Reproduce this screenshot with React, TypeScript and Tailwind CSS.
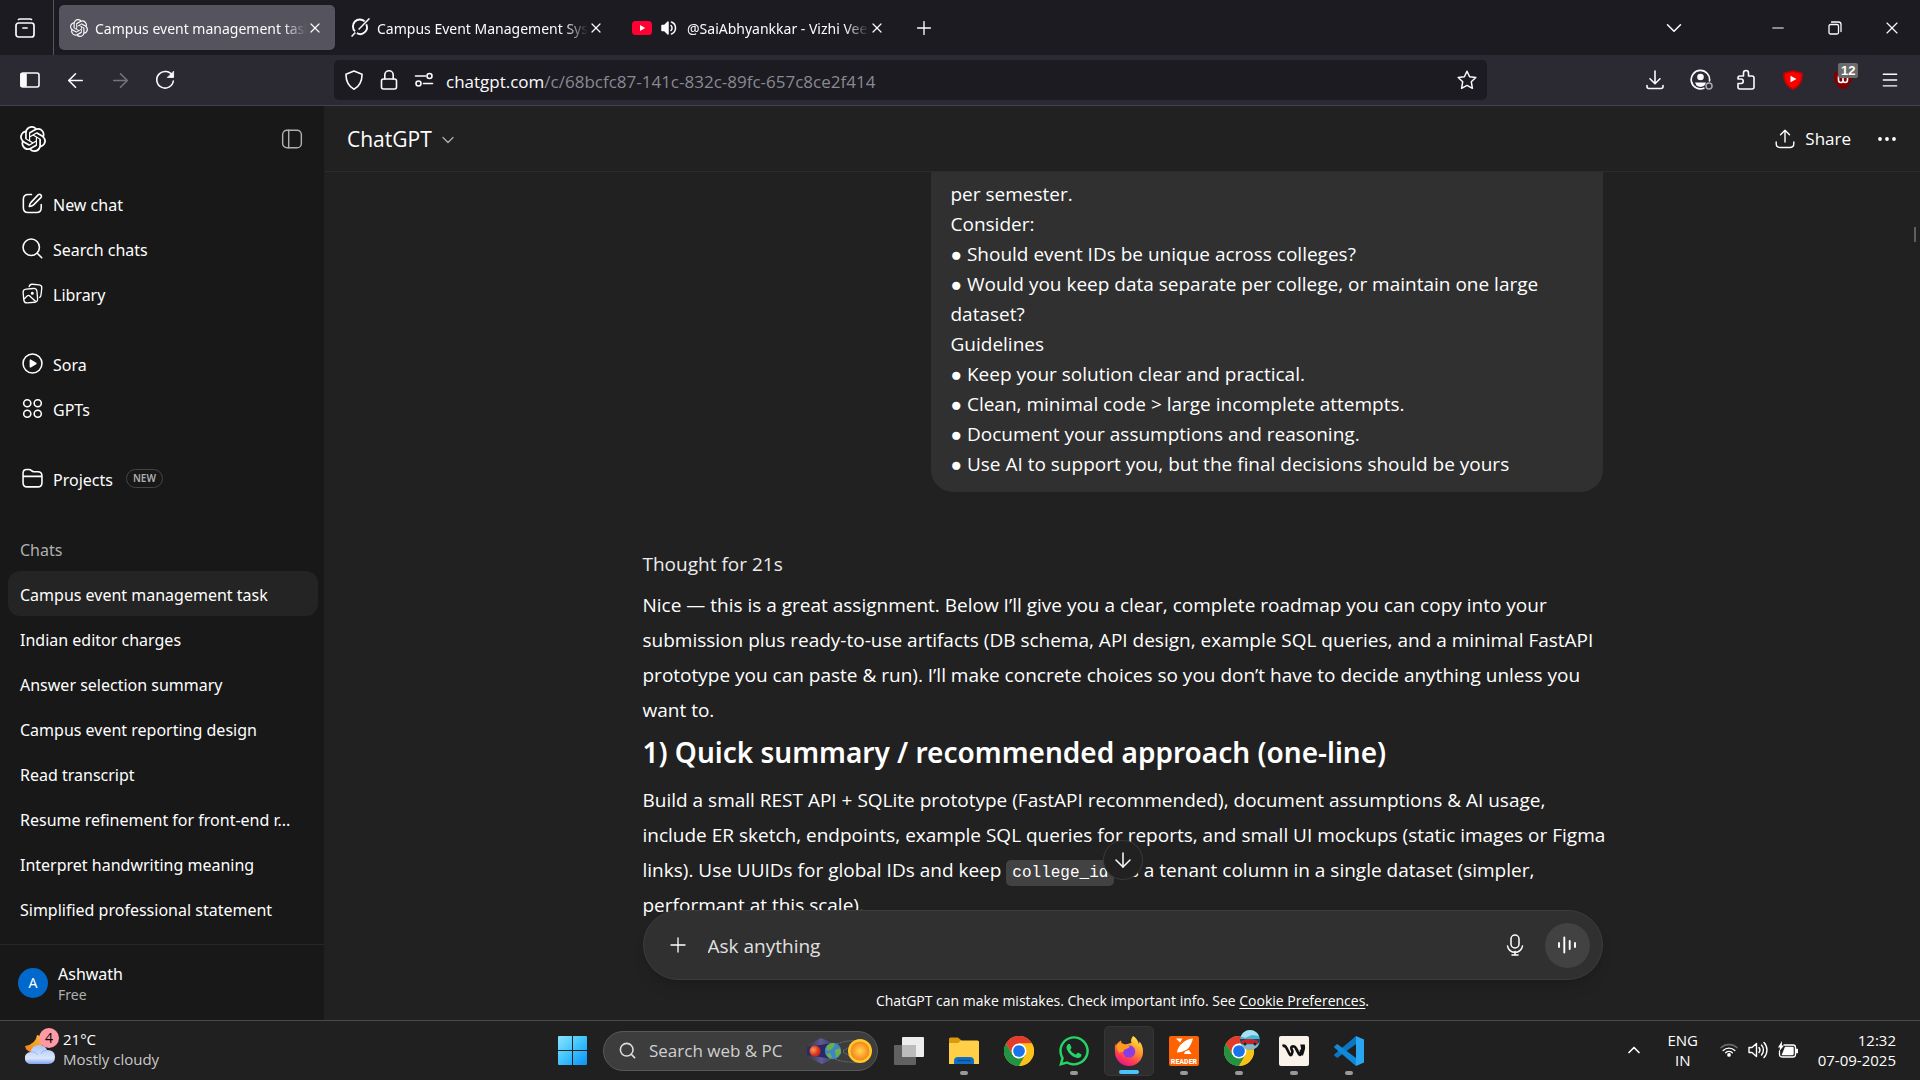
import React from "react";
import {
  ArrowDown, ArrowLeft, ArrowRight, ChevronDown, ChevronUp, Menu, Minus, Plus, Search, X,
} from "lucide-react";
import { FaWhatsapp } from "react-icons/fa";

type IconProps = { className?: string };

const stroke = {
  fill: "none",
  stroke: "currentColor",
  strokeLinecap: "round" as const,
  strokeLinejoin: "round" as const,
};

const KnotLogo = ({ className }: IconProps) => (
  <svg viewBox="0 0 24 24" className={className} fill="currentColor">
    <path d="M22.2819 9.8211a5.9847 5.9847 0 0 0-.5157-4.9108 6.0462 6.0462 0 0 0-6.5098-2.9A6.0651 6.0651 0 0 0 4.9807 4.1818a5.9847 5.9847 0 0 0-3.9977 2.9 6.0462 6.0462 0 0 0 .7427 7.0966 5.98 5.98 0 0 0 .511 4.9107 6.051 6.051 0 0 0 6.5146 2.9001A5.9847 5.9847 0 0 0 13.2599 24a6.0557 6.0557 0 0 0 5.7718-4.2058 5.9894 5.9894 0 0 0 3.9977-2.9001 6.0557 6.0557 0 0 0-.7475-7.0729zm-9.022 12.6081a4.4755 4.4755 0 0 1-2.8764-1.0408l.1419-.0804 4.7783-2.7582a.7948.7948 0 0 0 .3927-.6813v-6.7369l2.02 1.1686a.071.071 0 0 1 .038.052v5.5826a4.504 4.504 0 0 1-4.4945 4.4944zm-9.6607-4.1254a4.4708 4.4708 0 0 1-.5346-3.0137l.142.0852 4.783 2.7582a.7712.7712 0 0 0 .7806 0l5.8428-3.3685v2.3324a.0804.0804 0 0 1-.0332.0615L9.74 19.9502a4.4992 4.4992 0 0 1-6.1408-1.6464zM2.3408 7.8956a4.485 4.485 0 0 1 2.3655-1.9728V11.6a.7664.7664 0 0 0 .3879.6765l5.8144 3.3543-2.0201 1.1685a.0757.0757 0 0 1-.071 0l-4.8303-2.7865A4.504 4.504 0 0 1 2.3408 7.872zm16.5963 3.8558L13.1038 8.364 15.1192 7.2a.0757.0757 0 0 1 .071 0l4.8303 2.7913a4.4944 4.4944 0 0 1-.6765 8.1042v-5.6772a.79.79 0 0 0-.407-.667zm2.0107-3.0231l-.142-.0852-4.7735-2.7818a.7759.7759 0 0 0-.7854 0L9.409 9.2297V6.8974a.0662.0662 0 0 1 .0284-.0615l4.8303-2.7866a4.4992 4.4992 0 0 1 6.6802 4.66zM8.3065 12.863l-2.02-1.1638a.0804.0804 0 0 1-.038-.0567V6.0742a4.4992 4.4992 0 0 1 7.3757-3.4537l-.142.0805L8.704 5.459a.7948.7948 0 0 0-.3927.6813zm1.0976-2.3654l2.602-1.4998 2.6069 1.4998v2.9994l-2.5974 1.4997-2.6067-1.4997Z" />
  </svg>
);

const SlashedRing = ({ className }: IconProps) => (
  <svg viewBox="0 0 20 20" className={className} {...stroke} strokeWidth="2" strokeLinecap="butt">
    <path d="M14.4 3.6A7.1 7.1 0 0 0 4.2 14" />
    <path d="M16 6.6A7.1 7.1 0 0 1 6.2 16" />
    <path d="M19.4.4 8 12" strokeWidth="1.5" />
    <path d="M4.6 15.2.6 19.4" strokeWidth="1.6" />
  </svg>
);

const YouTubeIcon = ({ className }: IconProps) => (
  <svg viewBox="0 0 20 14" className={className}>
    <rect width="20" height="14" rx="3.5" fill="#ff0033" />
    <path d="M8 4v6l5.2-3z" fill="#fff" />
  </svg>
);

const TabSound = ({ className }: IconProps) => (
  <svg viewBox="0 0 16 16" className={className} {...stroke} strokeWidth="1.5">
    <path d="M1 5.5h2.5L7 2v12l-3.500-3.500H1z" fill="currentColor" />
    <path d="M10 5.500a3.500 3.500 0 0 1 0 5M10.500 2a6.500 6.500 0 0 1 0 12" />
  </svg>
);

const TabsView = ({ className }: IconProps) => (
  <svg viewBox="0 0 20 20" className={className} {...stroke} strokeWidth="1.700">
    <rect x="1" y="5" width="18" height="14" rx="2.500" />
    <path d="M3.500 1.500Q4 1 5 1h10q1 0 1.500.5M8 10h4" />
  </svg>
);

const SideView = ({ className }: IconProps) => (
  <svg viewBox="0 0 20 16" className={className} {...stroke} strokeWidth="1.600">
    <rect x="1" y="1" width="18" height="14" rx="2" />
    <path d="M1 2h5v12H1z" fill="currentColor" />
  </svg>
);

const Reload = ({ className }: IconProps) => (
  <svg viewBox="0 0 20 20" className={className} {...stroke} strokeWidth="1.600">
    <path d="M17.500 6A8.300 8.300 0 1 0 18.300 11" />
    <path d="M18.600 1.500v6h-6z" fill="currentColor" strokeWidth=".8" />
  </svg>
);

const ShieldOutline = ({ className }: IconProps) => (
  <svg viewBox="0 0 20 20" className={className} {...stroke} strokeWidth="1.600">
    <path d="M10 1 18 4.200C18.300 11 15 17 10 19.200 5 17 1.700 11 2 4.200Z" />
  </svg>
);

const LockIcon = ({ className }: IconProps) => (
  <svg viewBox="0 0 20 20" className={className} {...stroke} strokeWidth="1.600">
    <rect x="2.500" y="9" width="15" height="10" rx="2" />
    <path d="M5.800 9V5a4.200 4.200 0 0 1 8.400 0v4" />
  </svg>
);

const Permissions = ({ className }: IconProps) => (
  <svg viewBox="0 0 20 16" className={className} {...stroke} strokeWidth="1.600">
    <circle cx="15.500" cy="4" r="2.500" />
    <circle cx="4.500" cy="11.500" r="2.500" />
    <path d="M1.500 4h10M9.500 11.500h9" />
  </svg>
);

const StarIcon = ({ className }: IconProps) => (
  <svg viewBox="0 0 20 20" className={className} {...stroke} strokeWidth="1.500">
    <path d="m10 1.200 2.600 5.600 6.200.7-4.500 4.300 1.100 6.500L10 15.400l-5.400 2.900 1.100-6.500L1.200 7.500l6.200-.7z" />
  </svg>
);

const Download = ({ className }: IconProps) => (
  <svg viewBox="0 0 20 20" className={className} {...stroke} strokeWidth="1.600">
    <path d="M10 1v12.500M5 8.800l5 4.900 5-4.900M2 15.500v1Q2 18.500 4 18.500h12q2 0 2-2v-1" />
  </svg>
);

const Account = ({ className }: IconProps) => (
  <svg viewBox="0 0 24 22" className={className} {...stroke} strokeWidth="1.700">
    <path d="M19.500 12A9.200 9.200 0 1 0 13.800 19.200" />
    <circle cx="10.500" cy="8" r="3.300" fill="currentColor" stroke="none" />
    <path d="M5 13.500h11l-1.500 3a7 7 0 0 1-8 0z" fill="currentColor" stroke="none" />
    <circle cx="19" cy="17" r="3" stroke="#a9a8b0" strokeWidth="1.500" />
  </svg>
);

const Puzzle = ({ className }: IconProps) => (
  <svg viewBox="0 0 20 22" className={className} {...stroke} strokeWidth="1.600">
    <path d="M7.500 7V4a2.500 2.500 0 0 1 5 0v3H16q2 0 2 2v9q0 2-2 2H4q-2 0-2-2v-3.500h3a2 2 0 0 0 0-4.500H2V9q0-2 2-2z" />
  </svg>
);

const RedShield = ({ className }: IconProps) => (
  <svg viewBox="0 0 20 20" className={className}>
    <path d="M10 .2 19.700 2.800C20.500 11 17 17 10 19.900 3 17 -.5 11 .3 2.800Z" fill="#c80000" />
    <path d="M10 1.900 18 4C18.500 10.500 15.500 15.500 10 18 4.500 15.500 1.500 10.500 2 4Z" fill="#ff0000" />
    <path d="M7.500 5.700v6.600l6-3.300z" fill="#fff" />
  </svg>
);

const DarkShield = ({ className }: IconProps) => (
  <svg viewBox="0 0 20 20" className={className}>
    <path d="M10 .5Q14 2.500 19 2.500C19.500 11 17.500 16 10 19.700 2.500 16 .5 11 1 2.500 6 2.500 10 .5 10 .5Z" fill="#800000" />
    <path d="M5.500 6v4q0 2.500 2.300 2.500T10 10V8v2q0 2.500 2.200 2.500t2.300-2.500V6" fill="none" stroke="#fff" strokeWidth="1.600" />
  </svg>
);

const PanelToggle = ({ className }: IconProps) => (
  <svg viewBox="0 0 20 20" className={className} {...stroke} strokeWidth="1.300">
    <rect x="1.500" y="2" width="17" height="16" rx="4" />
    <path d="M7 2v16" />
  </svg>
);

const NewChat = ({ className }: IconProps) => (
  <svg viewBox="0 0 20 20" className={className} {...stroke} strokeWidth="1.500">
    <path d="M9 1.500H6Q1.300 1.500 1.300 6v8q0 4.500 4.500 4.500h8q4.500 0 4.500-4.500v-3" />
    <path d="M15.300 1.800q1.400-1.200 2.600 0t0 2.600L11 11.300q-1.500 1.300-4 1.600.3-2.500 1.600-4z" />
  </svg>
);

const SearchIcon = ({ className }: IconProps) => (
  <svg viewBox="0 0 20 20" className={className} {...stroke} strokeWidth="1.500">
    <circle cx="8.800" cy="8.800" r="7.800" />
    <path d="m14.500 14.500 4.300 4.300" />
  </svg>
);

const Library = ({ className }: IconProps) => (
  <svg viewBox="0 0 22 22" className={className} {...stroke} strokeWidth="1.400">
    <rect x="1.500" y="6" width="14.500" height="14.500" rx="3.500" transform="rotate(-5 9 13)" />
    <path d="M7.500 3.800Q8 1 11 1.300l7 .7q3 .5 2.700 3.200L20 12q-.3 2.600-1.500 3" />
    <path d="m2.500 16.500 3-3q1.300-1 2.600 0l6 5.500" />
    <circle cx="10.800" cy="10.800" r=".9" fill="currentColor" />
  </svg>
);

const PlayRing = ({ className }: IconProps) => (
  <svg viewBox="0 0 20 20" className={className} {...stroke} strokeWidth="1.500">
    <circle cx="10" cy="10" r="9" />
    <path d="M8 6.800v6.400l5.200-3.200z" fill="currentColor" />
  </svg>
);

const FourRings = ({ className }: IconProps) => (
  <svg viewBox="0 0 20 20" className={className} {...stroke} strokeWidth="1.500">
    <circle cx="5" cy="5" r="3.400" />
    <circle cx="15" cy="5" r="3.400" />
    <circle cx="5" cy="15" r="3.400" />
    <circle cx="15" cy="15" r="3.400" />
  </svg>
);

const FolderIcon = ({ className }: IconProps) => (
  <svg viewBox="0 0 20 20" className={className} {...stroke} strokeWidth="1.500">
    <path d="M1 5q0-3.500 3.500-3.500h2q1.500 0 2.500 1t2.500 1H15q4 0 4 4V14q0 4-4 4H5q-4 0-4-4zM1 8h18" />
  </svg>
);

const ShareIcon = ({ className }: IconProps) => (
  <svg viewBox="0 0 20 20" className={className} {...stroke} strokeWidth="1.400">
    <path d="M10 13V1.300M5.500 5.800 10 1.300l4.500 4.500M1.200 13v1.500q0 4 4 4h9.600q4 0 4-4V13" />
  </svg>
);

const Dots = ({ className }: IconProps) => (
  <svg viewBox="0 0 20 6" className={className} fill="currentColor">
    <circle cx="3" cy="3" r="1.900" />
    <circle cx="10" cy="3" r="1.900" />
    <circle cx="17" cy="3" r="1.900" />
  </svg>
);

const Mic = ({ className }: IconProps) => (
  <svg viewBox="0 0 18 22" className={className} {...stroke} strokeWidth="1.500">
    <rect x="5" y="1" width="8" height="13" rx="4" />
    <path d="M1.500 12a7.600 7.600 0 0 0 15 0M9 17.500V21M6 21h6" />
  </svg>
);

const Voice = ({ className }: IconProps) => (
  <svg viewBox="0 0 20 20" className={className} {...stroke} strokeWidth="1.900">
    <path d="M2 8v4M7.300 2.500v15M12.700 6v8M18 8v4" />
  </svg>
);

const Restore = ({ className }: IconProps) => (
  <svg viewBox="0 0 14 14" className={className} {...stroke} strokeWidth="1.300">
    <rect x="1" y="3.500" width="9.500" height="9.500" rx="1.500" />
    <path d="M3.500 1h7Q13 1 13 3.500v7" />
  </svg>
);

const Weather = ({ className }: IconProps) => (
  <svg viewBox="0 0 30 30" className={className}>
    <defs>
      <linearGradient id="cloud" x1="0" y1="0" x2="0" y2="1">
        <stop offset="0" stopColor="#a9c5f5" />
        <stop offset=".7" stopColor="#dbe6fb" />
        <stop offset="1" stopColor="#7ba4ee" />
      </linearGradient>
      <linearGradient id="moon" x1="0" y1="1" x2="1" y2="0">
        <stop offset="0" stopColor="#f27a1a" />
        <stop offset="1" stopColor="#fbc02d" />
      </linearGradient>
    </defs>
    <path d="M12 0q-1 9-12 11 1 6 8 6 9-1 10-11-1-5-6-6Z" fill="url(#moon)" />
    <path d="M6 29a6 6 0 0 1-.5-12Q7 10 14 10q6 0 8 5 8 0 8 7t-7 7Z" fill="url(#cloud)" />
    <path d="M5.500 17q5-1 7.500 3M22 15q-5 0-6 4" fill="none" stroke="#88aaf0" strokeWidth=".7" />
  </svg>
);

const StartLogo = ({ className }: IconProps) => (
  <svg viewBox="0 0 29 29" className={className}>
    <defs>
      <linearGradient id="start" x1="0" y1="0" x2="1" y2="1">
        <stop offset="0" stopColor="#8be4ff" />
        <stop offset=".5" stopColor="#3fc3fb" />
        <stop offset="1" stopColor="#0a91f5" />
      </linearGradient>
    </defs>
    <path d="M1 0h13v14H0V1q0-1 1-1zM15 0h13q1 0 1 1v13H15zM0 15h14v14H1q-1 0-1-1zM15 15h14v13q0 1-1 1H15z" fill="url(#start)" />
  </svg>
);

const SolarArt = ({ className }: IconProps) => (
  <svg viewBox="0 0 66 28" className={className}>
    <defs>
      <radialGradient id="sun">
        <stop offset="0" stopColor="#ffd84a" />
        <stop offset="1" stopColor="#f6831e" />
      </radialGradient>
      <radialGradient id="mars" cx=".35" cy=".4">
        <stop offset="0" stopColor="#ff9d5c" />
        <stop offset="1" stopColor="#d52d14" />
      </radialGradient>
      <linearGradient id="shade">
        <stop offset="0" stopColor="#4a4590" stopOpacity="0" />
        <stop offset=".5" stopColor="#6b66b8" />
        <stop offset="1" stopColor="#4a4590" stopOpacity=".4" />
      </linearGradient>
    </defs>
    <path d="m0 8 14-7 14 6v14l-13 6L0 20z" fill="url(#shade)" opacity=".75" />
    <path d="M0 10 26 6v16L0 18z" fill="#2c2865" />
    <path d="M30 7q9-4 20-3M36 14l8-5M36 15l8 5M28 22q10 4 22 3" stroke="#8a8a8a" strokeWidth=".7" strokeDasharray="2 1" fill="none" />
    <circle cx="8" cy="14" r="5.500" fill="url(#mars)" />
    <circle cx="26" cy="14" r="8.200" fill="#3a86c8" />
    <path d="M20 9q5-5 8-2l-2 4-4 3-3-1zM28 13l5-2 1 5-5 5zM19 17l4-1 2 4-2 2z" fill="#6fae45" />
    <circle cx="53" cy="14" r="12" fill="#ffca28" />
    <circle cx="53" cy="14" r="9.500" fill="url(#sun)" />
  </svg>
);

const TaskView = ({ className }: IconProps) => (
  <svg viewBox="0 0 30 28" className={className}>
    <rect x="8" width="22" height="20" rx="1" fill="#ededed" />
    <rect y="8" width="22" height="20" rx="1" fill="#6d6d6d" opacity=".85" />
    <path d="M8 8h14v12H8z" fill="#bcbcbc" />
  </svg>
);

const Explorer = ({ className }: IconProps) => (
  <svg viewBox="0 0 30 28" className={className}>
    <path d="M0 2q0-1.500 1.500-1.500H9L13 4v5H0z" fill="#d99a0b" />
    <path d="M0 6h9l3-2.500h16.500Q30 3.500 30 5v22H0z" fill="#ffcf48" />
    <path d="M5 27v-3q0-4 4-4h12q4 0 4 4v3z" fill="#0f6fc5" />
    <path d="M9 23.500h12" stroke="#0a4b94" strokeWidth="1.500" strokeLinecap="round" />
  </svg>
);

const ChromeIcon = ({ className }: IconProps) => (
  <svg viewBox="0 0 48 48" className={className}>
    <circle cx="24" cy="24" r="24" fill="#fbc116" />
    <path d="M3.200 12A24 24 0 0 1 44.800 12H24v12L13.600 30Z" fill="#e33b2e" />
    <path d="M3.200 12A24 24 0 0 0 24 48L34.400 30 24 24 13.600 30Z" fill="#229342" />
    <path d="M24 12h20.800A24 24 0 0 1 24 48L34.400 30Z" fill="#fbc116" />
    <circle cx="24" cy="24" r="12" fill="#fff" />
    <circle cx="24" cy="24" r="9.400" fill="#1a73e8" />
  </svg>
);

const FoxIcon = ({ className }: IconProps) => (
  <svg viewBox="0 0 30 30" className={className}>
    <defs>
      <linearGradient id="fox" x1=".8" y1="0" x2=".3" y2="1">
        <stop offset="0" stopColor="#fff04a" />
        <stop offset=".4" stopColor="#ff9a2b" />
        <stop offset=".75" stopColor="#ff3d4f" />
        <stop offset="1" stopColor="#e3129a" />
      </linearGradient>
      <radialGradient id="globe">
        <stop offset="0" stopColor="#7a3df5" />
        <stop offset="1" stopColor="#9a3bd8" />
      </radialGradient>
    </defs>
    <path d="M19 0q-3 4-1.500 7L9 9Q7 7 7 4.500 3.500 6 2.500 9L1.800 7.500Q0 11 1 16a14 14 0 0 0 28 0q.3-6-3.500-10.500L25 8Q23 2 19 0Z" fill="url(#fox)" />
    <circle cx="15" cy="15.500" r="6.300" fill="url(#globe)" />
    <path d="M3 8q4-1.500 8 .5l5 1.500q-1 2.500-4 3-3 1-2.500 3-3-1-4 1Q2 14 3 8Z" fill="#ff9c1f" />
  </svg>
);

const ReaderIcon = ({ className }: IconProps) => (
  <svg viewBox="0 0 30 30" className={className}>
    <rect width="30" height="30" rx="2" fill="#ff6200" />
    <path d="M7 2.500h6.500L11 6.500ZM24 2.500Q19 2.500 14 6.500 8.500 11 8 16.500q5 0 10-3Q22 10 24 2.500ZM16 15.500l4-1.500 2.500 4H15Z" fill="#fff" />
    <text x="15" y="27.500" textAnchor="middle" fill="#fff" fontFamily="Roboto, sans-serif" fontWeight="900" fontSize="7">READER</text>
  </svg>
);

const WaveTile = ({ className }: IconProps) => (
  <svg viewBox="0 0 30 30" className={className}>
    <rect width="30" height="30" rx="2" fill="#faf3ea" />
    <path d="M3.500 10Q6 9 7.500 12l3 6q1.300 2.500 2.300 0l.7-2.500-1-2.500q-1-3 2.500-2.500 1.200.2 2 2l3 5.500q1 2 1.800 0 .8-2 .2-4.500" fill="none" stroke="#111" strokeWidth="2.700" strokeLinejoin="round" />
    <path d="M21.300 8.500h4.500q.8 3-.3 6.500l-1.700 5-2-3q.8-4-.5-8.500Z" fill="#111" />
  </svg>
);

const CodeIcon = ({ className }: IconProps) => (
  <svg viewBox="0 0 30 30" className={className}>
    <path d="M22 0 30 3.500v23L22 30Z" fill="#2aa5f2" />
    <path d="M22 0v8L3.200 22 .5 19.800q-.7-.8 0-1.500Z" fill="#0a77c2" />
    <path d="M22 30v-8L3.200 8 .5 10.200q-.7.8 0 1.500Z" fill="#1289d8" />
  </svg>
);

const PhotoBadge = ({ className }: IconProps) => (
  <svg viewBox="0 0 20 20" className={className}>
    <clipPath id="photo"><circle cx="10" cy="10" r="10" /></clipPath>
    <g clipPath="url(#photo)">
      <path d="M0 0h20v20H0z" fill="#45b7d6" />
      <path d="M4 0 16 0 20 6 12 5 5 8 0 6z" fill="#a5e2ef" />
      <path d="M0 9h20v4H0z" fill="#1d4857" />
      <path d="m1 11 5-2h7l5 2v3H1z" fill="#c5252e" />
      <path d="M0 15h20v5H0z" fill="#8fb6c1" />
      <circle cx="5" cy="14" r="1.500" fill="#222" />
      <circle cx="15" cy="14" r="1.500" fill="#222" />
    </g>
  </svg>
);

const Wifi = ({ className }: IconProps) => (
  <svg viewBox="0 0 20 16" className={className} {...stroke} strokeWidth="1.500">
    <path d="M1 5.500a13 13 0 0 1 18 0" opacity=".35" />
    <path d="M3.500 8.500a9.300 9.300 0 0 1 13 0M6.300 11a5.500 5.500 0 0 1 7.400 0" />
    <circle cx="10" cy="13.500" r="1.300" fill="currentColor" />
  </svg>
);

const TraySound = ({ className }: IconProps) => (
  <svg viewBox="0 0 20 18" className={className} {...stroke} strokeWidth="1.400">
    <path d="M1 6.500h3L8.500 2.500v13L4 11.500H1z" />
    <path d="M11 6.500a4 4 0 0 1 0 5M13.500 4a7.500 7.500 0 0 1 0 10M16 1.500a11 11 0 0 1 0 15" />
  </svg>
);

const Battery = ({ className }: IconProps) => (
  <svg viewBox="0 0 20 17" className={className} {...stroke} strokeWidth="1.300">
    <path d="M6 4h9q2.500 0 2.500 2.500v7q0 2.500-2.500 2.500H4q-2.500 0-2.500-2.500V10" />
    <path d="M7 5.800h7.500q1.200 0 1.200 1.200v6q0 1.200-1.200 1.200H3.500Z" fill="currentColor" stroke="none" />
    <path d="M18 8.500h1.500v3H18z" fill="currentColor" />
    <path d="M4 0 0 6.500h2L1.500 10 6 4.500H3.800Z" fill="currentColor" stroke="none" />
  </svg>
);

const fade = "[mask-image:linear-gradient(to_right,black_calc(100%-24px),transparent)]";

function Tab({ title, active, children }: { title: string; active?: boolean; children: React.ReactNode }) {
  return (
    <div className={`flex h-[45px] w-[276px] items-center rounded-[5px] pr-3 pl-[11px] ${active ? "bg-[#54535e] shadow" : ""}`}>
      {children}
      <span className={`min-w-0 flex-1 overflow-hidden pt-[3px] font-['Noto_Sans'] text-sm whitespace-nowrap ${fade}`}>{title}</span>
      <button aria-label="Close tab" className="flex w-4 justify-center">
        <X className="size-4 shrink-0 stroke-[1.800]" />
      </button>
    </div>
  );
}

function BrowserChrome() {
  return (
    <header className="shrink-0 text-[#fbfbfe]">
      <div className="flex h-[55px] items-center bg-[#1c1b22]">
        <button aria-label="Recent tabs" className="flex h-full w-[54px] items-center border-r border-[#56555e] pl-[15px]">
          <TabsView className="size-5" />
        </button>
        <div className="ml-[5px] flex gap-[5px]">
          <Tab title="Campus event management task" active>
            <KnotLogo className="mr-[7px] size-[18px] shrink-0" />
          </Tab>
          <Tab title="Campus Event Management System">
            <SlashedRing className="mr-[7px] size-[19px] shrink-0" />
          </Tab>
          <Tab title="@SaiAbhyankkar - Vizhi Veekura">
            <YouTubeIcon className="mr-[9px] h-[14px] w-5 shrink-0" />
            <TabSound className="mr-[10px] size-4 shrink-0" />
          </Tab>
        </div>
        <button aria-label="New tab" className="ml-4"><Plus className="size-[22px] stroke-[1.500]" /></button>
        <button aria-label="List all tabs" className="mr-[62px] ml-auto"><ChevronDown className="size-[26px] stroke-[1.400]" /></button>
        <div className="flex items-center">
          <button aria-label="Minimize" className="flex w-[57px] justify-center"><Minus className="size-[18px] stroke-[1.500]" /></button>
          <button aria-label="Restore" className="flex w-[57px] justify-center"><Restore className="size-[14px]" /></button>
          <button aria-label="Close window" className="flex w-[57px] justify-center"><X className="size-5 stroke-[1.400]" /></button>
        </div>
      </div>
      <div className="flex h-[51px] items-center border-b border-[#43424b] bg-[#2b2a33]">
        <div className="flex w-[334px] shrink-0 items-center pl-[20px]">
          <button aria-label="Sidebar"><SideView className="h-4 w-5" /></button>
          <button aria-label="Back" className="ml-[24px]"><ArrowLeft className="size-[23px] stroke-[1.700]" /></button>
          <button aria-label="Forward" className="ml-[22px] text-[#75747c]"><ArrowRight className="size-[23px] stroke-[1.700]" /></button>
          <button aria-label="Reload" className="ml-[23px]"><Reload className="size-[20px]" /></button>
        </div>
        <div className="flex h-10 flex-1 items-center rounded-[5px] bg-[#1c1b22] px-[10px]">
          <ShieldOutline className="size-5" />
          <LockIcon className="ml-[15px] size-5" />
          <Permissions className="ml-[15px] h-4 w-5" />
          <div className="ml-3 flex-1 pt-[3px] text-[17px] text-[#8a8990]">
            <span className="text-[#fbfbfe]">chatgpt.com</span>/c/68bcfc87-141c-832c-89fc-657c8ce2f414
          </div>
          <button aria-label="Bookmark"><StarIcon className="size-5" /></button>
        </div>
        <div className="flex w-[433px] shrink-0 items-center justify-end pr-[20px]">
          <button aria-label="Downloads"><Download className="size-5" /></button>
          <button aria-label="Account" className="ml-[25px]"><Account className="h-[22px] w-6" /></button>
          <button aria-label="Extensions" className="ml-[22px]"><Puzzle className="h-[22px] w-5" /></button>
          <button aria-label="Video blocker" className="ml-[27px]"><RedShield className="size-5" /></button>
          <button aria-label="Content blocker" className="relative ml-[30px]">
            <DarkShield className="size-5" />
            <span className="absolute -top-[7px] left-[5px] rounded-[2px] bg-[#6b6b6b] px-[3px] font-['Liberation_Sans'] text-[13px] leading-[15px] font-bold text-white">12</span>
          </button>
          <button aria-label="Menu" className="ml-[27px]"><Menu className="size-5 stroke-[1.700]" /></button>
        </div>
      </div>
    </header>
  );
}

const groups = [
  [
    { label: "New chat", Icon: NewChat },
    { label: "Search chats", Icon: SearchIcon },
    { label: "Library", Icon: Library },
  ],
  [
    { label: "Sora", Icon: PlayRing },
    { label: "GPTs", Icon: FourRings },
  ],
  [{ label: "Projects", Icon: FolderIcon }],
];

const chats = [
  "Campus event management task",
  "Indian editor charges",
  "Answer selection summary",
  "Campus event reporting design",
  "Read transcript",
  "Resume refinement for front-end r...",
  "Interpret handwriting meaning",
  "Simplified professional statement",
];

function Sidebar() {
  return (
    <aside className="flex w-[325px] shrink-0 flex-col border-r border-[#202020] bg-[#181818] font-['Noto_Sans'] text-base">
      <div className="flex h-[65px] shrink-0 items-center justify-between pr-[21px] pl-[20px]">
        <KnotLogo className="size-[26px]" />
        <button aria-label="Close sidebar" className="text-[#afafaf]"><PanelToggle className="size-[22px]" /></button>
      </div>
      <nav className="mt-[10px] flex flex-col gap-[25px]">
        {groups.map((group, i) => (
          <div key={i}>
            {group.map(({ label, Icon }) => (
              <a key={label} href="#" className="flex h-[45px] items-center gap-[10px] pl-[22px]">
                <Icon className="size-[21px]" />
                <span className="pt-[3px]">{label}</span>
                {label === "Projects" && (
                  <span className="ml-[3px] rounded-full border border-[#444] px-[6px] text-[10px] leading-[17px] font-semibold text-[#afafaf]">NEW</span>
                )}
              </a>
            ))}
          </div>
        ))}
      </nav>
      <h2 className="mt-[25px] flex h-[45px] items-center pt-[3px] pl-5 text-[#afafaf]">Chats</h2>
      <div className="flex flex-1 flex-col pr-[6px] pl-2">
        {chats.map((chat, i) => (
          <a key={chat} href="#" className={`h-[45px] truncate rounded-xl px-3 pt-[2px] leading-[44px] ${i === 0 ? "bg-[#242424]" : ""}`}>{chat}</a>
        ))}
      </div>
      <button className="flex h-[76px] shrink-0 items-center gap-[10px] border-t border-[#262626] pl-[18px] text-left">
        <span className="flex size-[30px] items-center justify-center rounded-full bg-[#0169cc] text-sm">A</span>
        <span className="flex flex-col pt-[3px]">
          <span className="leading-[22px]">Ashwath</span>
          <span className="text-sm leading-5 text-[#afafaf]">Free</span>
        </span>
      </button>
    </aside>
  );
}

function Conversation() {
  return (
    <main className="relative flex min-w-0 flex-1 flex-col bg-[#212121] text-[19px]">
      <div className="flex h-[66px] shrink-0 items-center justify-between border-b border-[#2c2c2c] pr-[23px] pl-[22px]">
        <button className="flex items-center gap-[6px] pt-[3px] text-[21px]">
          ChatGPT <ChevronDown className="size-5 stroke-[1.500] text-[#afafaf]" />
        </button>
        <div className="flex items-center">
          <button className="flex items-center gap-[10px] pt-px text-[17px]"><ShareIcon className="size-5" />Share</button>
          <button aria-label="More" className="ml-[26px]"><Dots className="h-[6px] w-5" /></button>
        </div>
      </div>
      <div className="min-h-0 flex-1 overflow-hidden">
        <div className="mx-auto flex max-w-[960px] flex-col">
          <div className="w-[672px] self-end rounded-b-[22px] bg-[#303030] px-5 pt-[7px] pb-[13px] leading-[30px]">
            per semester.<br />
            Consider:<br />
            ● Should event IDs be unique across colleges?<br />
            ● Would you keep data separate per college, or maintain one large<br />
            dataset?<br />
            Guidelines<br />
            ● Keep your solution clear and practical.<br />
            ● Clean, minimal code &gt; large incomplete attempts.<br />
            ● Document your assumptions and reasoning.<br />
            ● Use AI to support you, but the final decisions should be yours
          </div>
          <div className="mt-[57px] leading-[30px] text-[#ececec]">Thought for 21s</div>
          <p className="mt-[9px] leading-[35px] whitespace-nowrap">
            Nice — this is a great assignment. Below I’ll give you a clear, complete roadmap you can copy into your<br />
            submission plus ready-to-use artifacts (DB schema, API design, example SQL queries, and a minimal FastAPI<br />
            prototype you can paste &amp; run). I’ll make concrete choices so you don’t have to decide anything unless you<br />
            want to.
          </p>
          <h1 className="mt-1 font-['Noto_Sans'] text-[28px] leading-[40px] font-semibold">1) Quick summary / recommended approach (one-line)</h1>
          <p className="mt-[11px] leading-[35px] whitespace-nowrap">
            Build a small REST API + SQLite prototype (FastAPI recommended), document assumptions &amp; AI usage,<br />
            include ER sketch, endpoints, example SQL queries for reports, and small UI mockups (static images or Figma<br />
            links). Use UUIDs for global IDs and keep{" "}
            <code className="rounded-[5px] bg-[#424242] px-[6px] py-[4px] font-['Liberation_Mono'] text-base">college_id</code> as a tenant column in a single dataset (simpler,<br />
            performant at this scale).
          </p>
        </div>
      </div>
      <div className="relative z-10 mx-auto -mt-2 w-full max-w-[960px] shrink-0">
        <button aria-label="Scroll to bottom" className="absolute -top-[70px] left-1/2 -ml-5 flex size-10 items-center justify-center rounded-full border border-[#3a3a3a] bg-[#212121]">
          <ArrowDown className="size-6 stroke-[1.500]" />
        </button>
        <form className="flex h-[70px] items-center rounded-full border border-[#3c3c3c] bg-[#303030] pr-3 pl-[22px] shadow-lg">
          <button type="button" aria-label="Add files"><Plus className="size-6 stroke-[1.300]" /></button>
          <input aria-label="Message" placeholder="Ask anything" className="ml-[18px] flex-1 bg-transparent pt-[3px] outline-none placeholder:text-[#e0e0e0]" />
          <button type="button" aria-label="Dictate" className="mr-[21px]"><Mic className="h-[22px] w-[18px]" /></button>
          <button type="button" aria-label="Voice mode" className="flex size-[45px] items-center justify-center rounded-full bg-[#424242]"><Voice className="size-5" /></button>
        </form>
        <p className="flex h-10 items-center justify-center pt-px text-sm text-white">
          <span>ChatGPT can make mistakes. Check important info. See <a href="#" className="underline underline-offset-2">Cookie Preferences</a>.</span>
        </p>
      </div>
      <div className="absolute top-[121px] right-1 h-[15px] w-[2px] bg-[#5f5f5f]" />
    </main>
  );
}

const apps = [
  { name: "Task view", Icon: TaskView, mark: "" },
  { name: "File Explorer", Icon: Explorer, mark: "w-2 bg-[#999]" },
  { name: "Chrome", Icon: ChromeIcon, mark: "" },
  { name: "WhatsApp", Icon: FaWhatsapp, mark: "w-2 bg-[#999]" },
  { name: "Firefox", Icon: FoxIcon, mark: "w-5 bg-[#4cc2ff]" },
  { name: "Reader", Icon: ReaderIcon, mark: "w-2 bg-[#999]" },
  { name: "Chrome profile", Icon: ChromeIcon, mark: "w-2 bg-[#999]" },
  { name: "Notes", Icon: WaveTile, mark: "w-2 bg-[#999]" },
  { name: "Code", Icon: CodeIcon, mark: "w-2 bg-[#999]" },
];

function Taskbar() {
  return (
    <footer className="relative flex h-[60px] shrink-0 items-center justify-between border-t border-[#4a4a4a] bg-[#202020] text-[15px] leading-[20px]">
      <button className="flex items-center gap-2 pb-[2px] pl-[25px] text-left">
        <span className="relative">
          <Weather className="size-[30px]" />
          <span className="absolute -top-[7px] left-[14px] flex size-5 items-center justify-center rounded-full bg-[#ff99a4] text-sm text-black">4</span>
        </span>
        <span className="flex flex-col pb-[2px]">
          <span>21°C</span>
          <span className="text-[#c8c8c8]">Mostly cloudy</span>
        </span>
      </button>
      <div className="absolute left-1/2 flex -translate-x-1/2 items-center pl-3">
        <button aria-label="Start" className="mr-4"><StartLogo className="size-[29px]" /></button>
        <label className="mr-[6px] flex h-10 w-[275px] items-center rounded-full border border-[#585858] bg-[#3d3d3d] pr-1 pl-[14px]">
          <Search className="size-[19px] text-[#ddd]" />
          <input aria-label="Search" placeholder="Search web & PC" className="ml-3 w-[140px] bg-transparent text-[17px] outline-none placeholder:text-[#d0d0d0]" />
          <SolarArt className="ml-auto h-7 w-[66px] shrink-0" />
        </label>
        <div className="flex gap-[5px]">
          {apps.map(({ name, Icon, mark }) => (
            <button key={name} aria-label={name} className={`relative flex size-[50px] items-center justify-center rounded-[5px] ${name === "Firefox" ? "border border-[#363636] bg-[#2d2d2d]" : ""}`}>
              <Icon className={name === "WhatsApp" ? "size-[34px] text-[#25d366]" : "size-[30px]"} />
              {name === "Chrome profile" && <PhotoBadge className="absolute top-1 right-1 size-5" />}
              {mark && <span className={`absolute bottom-[1px] h-1 rounded-full ${mark}`} />}
            </button>
          ))}
        </div>
      </div>
      <div className="flex items-center pr-6 pb-[2px]">
        <ChevronUp className="size-5" />
        <div className="ml-[14px] w-[50px] text-center">ENG<br />IN</div>
        <Wifi className="ml-[12px] h-4 w-[18px]" />
        <TraySound className="ml-[10px] h-[18px] w-5" />
        <Battery className="ml-[10px] h-[17px] w-5" />
        <div className="ml-[20px] text-right">12:32<br />07-09-2025</div>
      </div>
    </footer>
  );
}

export default function App() {
  return (
    <div className="flex h-screen flex-col overflow-hidden bg-[#212121] font-['Open_Sans',sans-serif] text-white">
      <BrowserChrome />
      <div className="flex min-h-0 flex-1">
        <Sidebar />
        <Conversation />
      </div>
      <Taskbar />
    </div>
  );
}
